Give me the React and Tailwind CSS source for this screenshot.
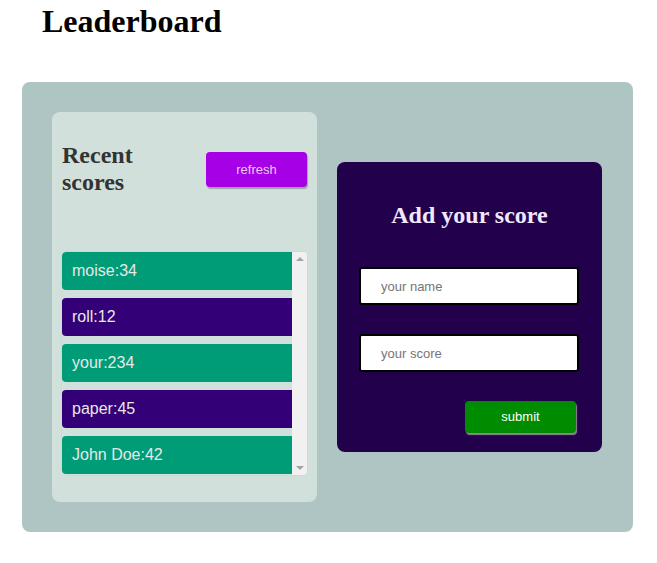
const scores = [
  { name: 'moise', score: 34 },
  { name: 'roll', score: 12 },
  { name: 'your', score: 234 },
  { name: 'paper', score: 45 },
  { name: 'John Doe', score: 42 },
];

export default function App() {
  return (
    <div className="min-h-screen bg-white font-['Liberation_Sans',sans-serif]">
      <h1 className="pl-[42px] pt-[3px] text-[32px] leading-[37px] font-bold text-black font-['Liberation_Serif',serif]">
        Leaderboard
      </h1>

      <div className="ml-[22px] mt-[42px] w-[611px] h-[450px] rounded-lg bg-[#afc5c3] p-[30px] flex items-start gap-5">
        <section className="w-[265px] h-[390px] rounded-lg bg-[#d1e0da] px-[10px] pt-[30px]">
          <div className="flex items-center justify-between">
            <h2 className="text-[24px] leading-[27px] font-bold text-[#333] font-['Liberation_Serif',serif]">
              Recent
              <br />
              scores
            </h2>
            <button className="w-[101px] h-[35px] pt-[2px] rounded-[4px] bg-[#a600e6] text-[13px] text-[#e6ccf5] shadow-[1px_2px_1px_#9aa89f]">
              refresh
            </button>
          </div>

          <div className="mt-[56px] h-[223px] flex rounded-[4px] overflow-hidden ring-1 ring-[#d9d2e3]">
            <ul className="flex-1 flex flex-col gap-2 overflow-hidden">
              {scores.map((s, i) => (
                <li
                  key={s.name}
                  className={`shrink-0 h-[38px] flex items-center pl-[10px] text-[16px] text-[#e8e8e8] rounded-l-[4px] ${
                    i % 2 === 0 ? 'bg-[#009c77]' : 'bg-[#330077]'
                  }`}
                >
                  {s.name}:{s.score}
                </li>
              ))}
            </ul>
            <div className="w-[15px] bg-[#f1f1f1] flex flex-col items-center justify-between py-[5px]">
              <div className="w-0 h-0 border-x-[4px] border-x-transparent border-b-[4px] border-b-[#a3a3a3]" />
              <div className="w-0 h-0 border-x-[4px] border-x-transparent border-t-[4px] border-t-[#a3a3a3]" />
            </div>
          </div>
        </section>

        <form className="mt-[50px] w-[265px] h-[290px] rounded-lg bg-[#22004c] px-[22px] pt-[38px] flex flex-col">
          <h2 className="text-center text-[24px] leading-[30px] font-bold text-[#f0e8ff] font-['Liberation_Serif',serif]">
            Add your score
          </h2>
          <input
            type="text"
            placeholder="your name"
            className="mt-[37px] h-[38px] w-[220px] rounded-[3px] border-2 border-black bg-white pl-[20px] text-[13px] text-black placeholder:text-[#757575] outline-none"
          />
          <input
            type="text"
            placeholder="your score"
            className="mt-[29px] h-[38px] w-[220px] rounded-[3px] border-2 border-black bg-white pl-[20px] text-[13px] text-black placeholder:text-[#757575] outline-none"
          />
          <div className="mt-[29px] flex justify-end pr-[4px]">
            <button
              type="button"
              className="w-[111px] h-[32px] rounded-[4px] bg-[#008c00] text-[13px] text-white shadow-[1px_2px_1px_#8a8a8a]"
            >
              submit
            </button>
          </div>
        </form>
      </div>
    </div>
  );
}
